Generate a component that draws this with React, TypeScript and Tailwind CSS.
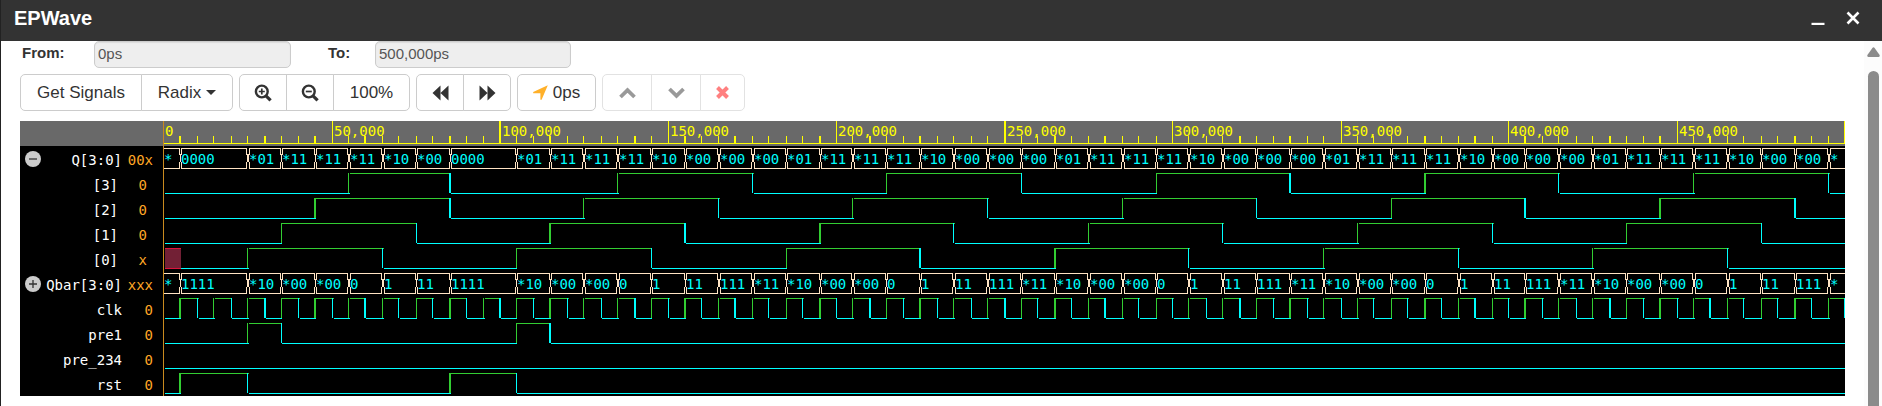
import { useLayoutEffect, useRef, useState } from "react";
import type { ReactNode } from "react";

type Bit = { kind: "bit"; edges: number[]; unknown?: boolean };
type Bus = { kind: "bus"; cells: [number, string][] };
type Signal = { name: string; value: string; nested?: boolean; toggle?: "open" | "closed"; wave: Bit | Bus };

const ROW = 25;
const RULER = 25;
const UNITS = 100;
const MONO = "font-['DejaVu_Sans_Mono',monospace] text-[14px]";

function repeat(head: [number, string][], from: number, names: string[]): [number, string][] {
  const cells = [...head];
  for (let n = from, i = 0; n < UNITS - 1; n += 2, i++) cells.push([n, names[i % names.length]]);
  cells.push([UNITS - 1, "*"]);
  return cells;
}

function pulses(head: number[], from: number): number[] {
  const edges = [...head];
  for (let n = from; n < UNITS; n += 8) edges.push(n);
  return edges;
}

const qCells = repeat(
  [[0, "*"], [1, "0000"], [5, "*01"], [7, "*11"], [9, "*11"], [11, "*11"], [13, "*10"], [15, "*00"], [17, "0000"]],
  21,
  ["*01", "*11", "*11", "*11", "*10", "*00", "*00", "*00"],
);
const qbarCells = repeat(
  [[0, "*"], [1, "1111"], [5, "*10"], [7, "*00"], [9, "*00"], [11, "0"], [13, "1"], [15, "11"], [17, "1111"]],
  21,
  ["*10", "*00", "*00", "0", "1", "11", "111", "*11"],
);

const signals: Signal[] = [
  { name: "Q[3:0]", value: "00x", toggle: "open", wave: { kind: "bus", cells: qCells } },
  { name: "[3]", value: "0", nested: true, wave: { kind: "bit", edges: pulses([11, 17], 27) } },
  { name: "[2]", value: "0", nested: true, wave: { kind: "bit", edges: pulses([9, 17], 25) } },
  { name: "[1]", value: "0", nested: true, wave: { kind: "bit", edges: pulses([7, 15], 23) } },
  { name: "[0]", value: "x", nested: true, wave: { kind: "bit", edges: pulses([5, 13], 21), unknown: true } },
  { name: "Qbar[3:0]", value: "xxx", toggle: "closed", wave: { kind: "bus", cells: qbarCells } },
  { name: "clk", value: "0", wave: { kind: "bit", edges: Array.from({ length: UNITS }, (_, i) => i + 1) } },
  { name: "pre1", value: "0", wave: { kind: "bit", edges: [5, 7, 21, 23] } },
  { name: "pre_234", value: "0", wave: { kind: "bit", edges: [] } },
  { name: "rst", value: "0", wave: { kind: "bit", edges: [1, 5, 17, 21] } },
];

// Time units are placed on a 1.25 px grid and then on whole pixels.
function makeScale(width: number) {
  const step = (width - 0.75) / 1.25 / UNITS;
  const grid = (n: number) => Math.floor(131 + step * n + 0.5001);
  return {
    edge(n: number) {
      const c = grid(n);
      const x = Math.floor(1.25 * c) - 163;
      return c % 4 === 0 ? { x: x - 1, w: 2 } : { x, w: 1 };
    },
    end: (n: number) => Math.ceil(1.25 * (grid(n) + 0.5)) - 163,
  };
}
type Scale = ReturnType<typeof makeScale>;

function Ruler({ scale, width }: { scale: Scale; width: number }) {
  const ticks = Array.from({ length: UNITS + 1 }, (_, n) => n).filter((n) => n > 0);
  return (
    <g>
      <rect width={width} height={RULER} fill="#696969" />
      <rect x={1} y={22} width={width} height={1} fill="#ff0" />
      {ticks.map((n) => {
        const { x, w } = scale.edge(n);
        const major = n % 10 === 0;
        return <rect key={n} x={x} y={major ? 0 : 15} width={w} height={major ? 22 : 7} fill="#ff0" />;
      })}
      {Array.from({ length: 10 }, (_, i) => (
        <text key={i} x={scale.edge(i * 10).x + scale.edge(i * 10).w + 1} y={15} fill="#ff0">
          {(i * 5000 * 10).toLocaleString("en-US")}
        </text>
      ))}
    </g>
  );
}

function BitWave({ wave, scale }: { wave: Bit; scale: Scale }) {
  const stops = [wave.unknown ? 1 : 0, ...wave.edges, UNITS + 1];
  return (
    <g>
      {wave.unknown && (
        <>
          <rect x={2} y={2} width={scale.end(1) - 2} height={21} fill="#722035" />
          <rect x={2} y={2} width={scale.end(1) - 2} height={1} fill="#dc143c" />
          <rect x={2} y={22} width={scale.end(1) - 2} height={1} fill="#dc143c" />
        </>
      )}
      {stops.slice(0, -1).map((n, i) => {
        const high = i % 2 === 1;
        const x = scale.end(n);
        const color = high ? "#32cd32" : "#0ff";
        const edge = scale.edge(n);
        return (
          <g key={n} fill={color}>
            {i > 0 && <rect x={edge.x} y={2} width={edge.w} height={20} />}
            <rect x={x} y={high ? 2 : 22} width={scale.end(stops[i + 1]) - x} height={1} />
          </g>
        );
      })}
    </g>
  );
}

function BusWave({ wave, scale }: { wave: Bus; scale: Scale }) {
  return (
    <g>
      {wave.cells.map(([n, label], i) => {
        const next = i + 1 < wave.cells.length ? wave.cells[i + 1][0] : UNITS + 1;
        const a = n === 0 ? 2 : scale.end(n) + 1;
        const e = scale.edge(next);
        const b = e.x + e.w - 1;
        const left = `M${a} 2.5h-1M${a - 0.5} 3v6M${a - 1.5} 8v8M${a - 0.5} 16v6`;
        const right = `M${b - 0.5} 3v6M${b + 0.5} 8v8M${b - 0.5} 16v6`;
        return (
          <g key={n}>
            <path d={`M${a - 1} 2.5H${b}M${a - 1} 22.5H${b}${n > 0 ? left : ""}${right}`} stroke="#ffe4c4" fill="none" />
            <text x={n === 0 ? 1 : a - 1} y={18} fill="#0ff">
              {label}
            </text>
          </g>
        );
      })}
    </g>
  );
}

function Waves() {
  const ref = useRef<HTMLDivElement>(null);
  const [width, setWidth] = useState(1682);
  useLayoutEffect(() => {
    const el = ref.current;
    if (!el) return;
    const update = () => setWidth(el.clientWidth);
    update();
    const ro = new ResizeObserver(update);
    ro.observe(el);
    return () => ro.disconnect();
  }, []);
  const scale = makeScale(width);
  const height = RULER + signals.length * ROW;
  return (
    <div ref={ref} className="min-w-0 flex-1 overflow-hidden">
      <svg width={width} height={height} shapeRendering="crispEdges" className={`block ${MONO}`} role="img" aria-label="Waveforms">
        <Ruler scale={scale} width={width} />
        {signals.map((s, i) => (
          <g key={s.name} transform={`translate(0 ${RULER + i * ROW})`}>
            {s.wave.kind === "bus" ? <BusWave wave={s.wave} scale={scale} /> : <BitWave wave={s.wave} scale={scale} />}
          </g>
        ))}
        <rect width={1} height={height} fill="#c98a1e" />
      </svg>
    </div>
  );
}

function SignalList() {
  return (
    <div className={`w-[143px] shrink-0 ${MONO}`}>
      <div className="h-[25px] bg-[#696969]" />
      {signals.map((s) => (
        <div key={s.name} className={`flex h-[25px] items-center pl-[5px] ${s.nested ? "pr-[16px]" : "pr-[10px]"}`}>
          {s.toggle && (
            <button type="button" aria-label={`Toggle ${s.name}`} className="size-4 shrink-0 rounded-full bg-[#ccc]">
              <svg viewBox="0 0 16 16" className="size-4" stroke="#333" strokeWidth="1.3">
                <path d={s.toggle === "open" ? "M4 8h8" : "M4 8h8M8 4v8"} />
              </svg>
            </button>
          )}
          <span className="flex-1 pt-[3px] text-right leading-[22px] text-white">{s.name}</span>
          <span className={`pt-[3px] text-right leading-[22px] text-[#ffa726] ${s.nested ? "w-[29px]" : "w-[31px]"}`}>{s.value}</span>
        </div>
      ))}
    </div>
  );
}

function Tool({ children, label, className = "", disabled }: { children: ReactNode; label?: string; className?: string; disabled?: boolean }) {
  return (
    <button
      type="button"
      aria-label={label}
      disabled={disabled}
      className={`-ml-px flex h-[37px] items-center justify-center border bg-white text-[17px] text-[#333] first:ml-0 first:rounded-l-[5px] last:rounded-r-[5px] ${disabled ? "border-[#e2e2e2]" : "border-[#ccc]"} ${className}`}
    >
      {children}
    </button>
  );
}

function ZoomIcon({ plus }: { plus?: boolean }) {
  return (
    <svg viewBox="0 0 18 18" className="size-[18px]" fill="none" stroke="#333">
      <circle cx="7.8" cy="7.5" r="5.9" strokeWidth="2.4" />
      <path d="M12 11.8L16.6 16.4" strokeWidth="3.2" />
      <path d={plus ? "M4.8 7.5h6M7.8 4.5v6" : "M4.8 7.5h6"} strokeWidth="1.7" />
    </svg>
  );
}

export default function App() {
  return (
    <div className="flex min-h-screen flex-col overflow-hidden border-l border-[#222] bg-white font-['Liberation_Sans',Arial,sans-serif]">
      <header className="flex h-[41px] shrink-0 items-center justify-between bg-[#333] pl-[13px] pr-[22px] text-white">
        <h1 className="pb-[6px] text-[20px] font-bold leading-6">EPWave</h1>
        <div className="flex items-center gap-[21px] pb-[5px]">
          <button type="button" aria-label="Minimize">
            <svg viewBox="0 0 14 14" className="size-[14px]">
              <path d="M.5 13h13" stroke="#fff" strokeWidth="2.4" />
            </svg>
          </button>
          <button type="button" aria-label="Close">
            <svg viewBox="0 0 14 14" className="size-[14px]">
              <path d="M1.5 1.5L12.5 12.5M12.5 1.5L1.5 12.5" stroke="#fff" strokeWidth="2.6" />
            </svg>
          </button>
        </div>
      </header>
      <div className="flex flex-1">
        <main className="min-w-0 flex-1 pl-[19px] pr-[19px] pb-[10px]">
          <form className="flex text-[15px] leading-[20px]">
            <label htmlFor="from" className="w-[74px] pl-[2px] pt-[2px] font-bold text-[#333]">From:</label>
            <input id="from" readOnly value="0ps" className="h-[27px] w-[197px] rounded-[5px] border border-[#ccc] bg-[#eee] px-[3px] pb-[2px] text-[#555] shadow-[inset_0_1px_1px_rgba(0,0,0,0.08)]" />
            <label htmlFor="to" className="ml-[37px] w-[47px] pt-[2px] font-bold text-[#333]">To:</label>
            <input id="to" readOnly value="500,000ps" className="h-[27px] w-[196px] rounded-[5px] border border-[#ccc] bg-[#eee] px-[3px] pb-[2px] text-[#555] shadow-[inset_0_1px_1px_rgba(0,0,0,0.08)]" />
          </form>
          <div className="mt-[6px] flex gap-[6px]">
            <div className="flex">
              <Tool className="w-[122px]">Get Signals</Tool>
              <Tool className="w-[92px] gap-[5px]">
                Radix
                <svg viewBox="0 0 10 5" className="h-[5px] w-[10px]" fill="#333"><path d="M0 0h10L5 5z" /></svg>
              </Tool>
            </div>
            <div className="flex">
              <Tool className="w-[48px]" label="Zoom in"><ZoomIcon plus /></Tool>
              <Tool className="w-[48px]" label="Zoom out"><ZoomIcon /></Tool>
              <Tool className="w-[77px]">100%</Tool>
            </div>
            <div className="flex">
              <Tool className="w-[48px]" label="Previous">
                <svg viewBox="0 0 17 16" className="h-4 w-[17px]" fill="#333"><path d="M8.5 .5v15L.5 8zM16.5 .5v15L8.5 8z" /></svg>
              </Tool>
              <Tool className="w-[48px]" label="Next">
                <svg viewBox="0 0 17 16" className="h-4 w-[17px]" fill="#333"><path d="M.5 .5v15L8.5 8zM8.5 .5v15L16.5 8z" /></svg>
              </Tool>
            </div>
            <div className="flex">
              <Tool className="w-[79px] gap-[5px]">
                <svg viewBox="0 0 15 15" className="size-[15px]" fill="#ffb029"><path d="M14.8 .2L8.6 14.8H7.4V8.2H.2V7z" /></svg>
                0ps
              </Tool>
            </div>
            <div className="flex">
              <Tool className="w-[50px]" label="Move up" disabled>
                <svg viewBox="0 0 17 12" className="h-3 w-[17px]" fill="none" stroke="#999" strokeWidth="3.8"><path d="M1.5 10L8.5 3.2 15.5 10" /></svg>
              </Tool>
              <Tool className="w-[50px]" label="Move down" disabled>
                <svg viewBox="0 0 17 12" className="h-3 w-[17px]" fill="none" stroke="#999" strokeWidth="3.8"><path d="M1.5 2L8.5 8.8 15.5 2" /></svg>
              </Tool>
              <Tool className="w-[45px]" label="Remove" disabled>
                <svg viewBox="0 0 13 13" className="size-[13px]" stroke="#ff8080" strokeWidth="4"><path d="M1.5 1.5L11.5 11.5M11.5 1.5L1.5 11.5" /></svg>
              </Tool>
            </div>
          </div>
          <div className="mt-[10px] flex bg-black">
            <SignalList />
            <Waves />
          </div>
        </main>
        <div className="flex w-[18px] flex-col items-center bg-[#fcfcfc] pt-[6px]">
          <svg viewBox="0 0 13 10" className="h-[10px] w-[13px]" fill="#8b8b8b"><path d="M5.4 1Q6.5 -.5 7.6 1L12.6 8Q13 10 11.5 10H1.5Q0 10 .4 8z" /></svg>
          <div className="mt-[14px] w-[11px] flex-1 rounded-t-full bg-[#8b8b8b]" />
        </div>
      </div>
    </div>
  );
}
